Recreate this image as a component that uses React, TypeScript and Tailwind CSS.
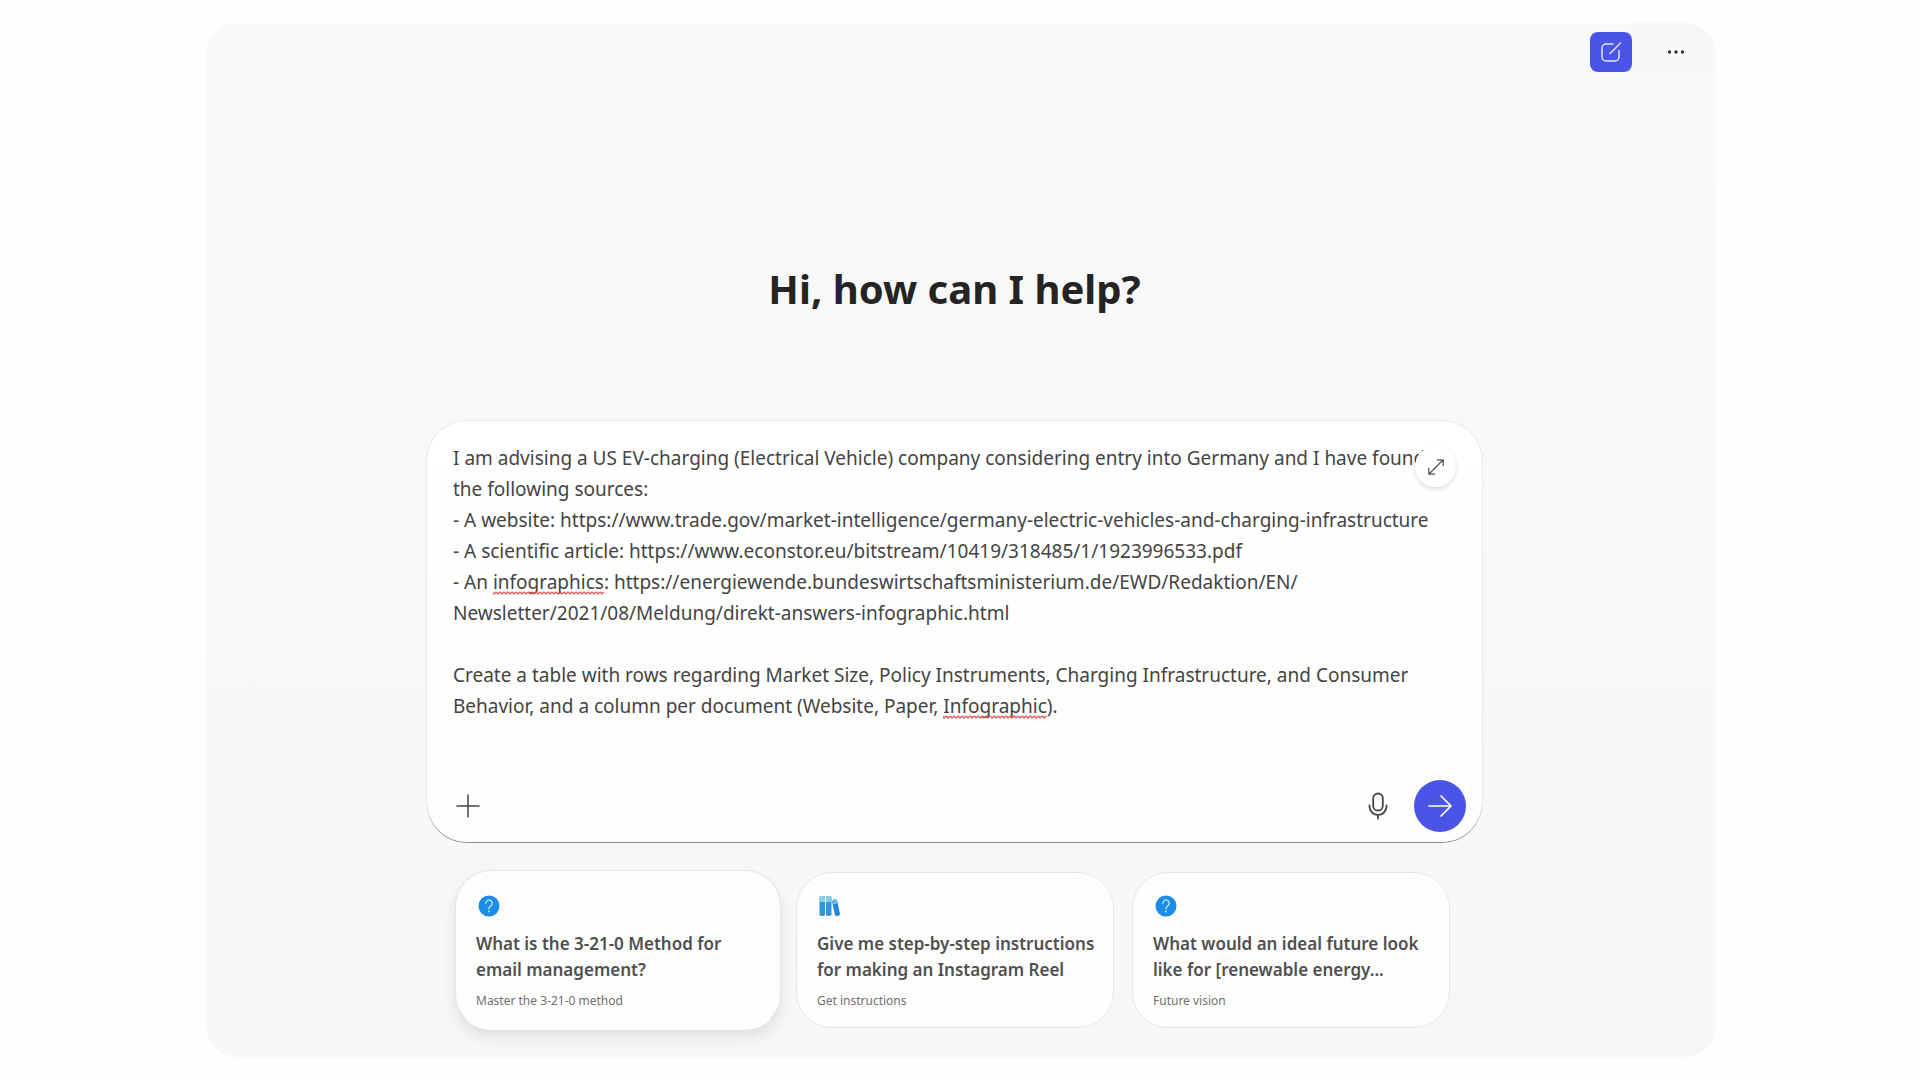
import { useLayoutEffect, useRef, useState } from "react"
import clsx from "clsx"

type Suggestion = {
  id: string
  icon: "question" | "books"
  title: string
  subtitle: string
  active?: boolean
}

type Mark = { line: number; left: number; width: number }

const SUGGESTIONS: Suggestion[] = [
  {
    id: "email",
    icon: "question",
    title: "What is the 3-21-0 Method for email management?",
    subtitle: "Master the 3-21-0 method",
    active: true
  },
  {
    id: "reel",
    icon: "books",
    title: "Give me step-by-step instructions for making an Instagram Reel",
    subtitle: "Get instructions"
  },
  {
    id: "future",
    icon: "question",
    title: "What would an ideal future look like for [renewable energy...",
    subtitle: "Future vision"
  }
]

const PROMPT = `I am advising a US EV-charging (Electrical Vehicle) company considering entry into Germany and I have found
the following sources:
- A website: https://www.trade.gov/market-intelligence/germany-electric-vehicles-and-charging-infrastructure
- A scientific article: https://www.econstor.eu/bitstream/10419/318485/1/1923996533.pdf
- An infographics: https://energiewende.bundeswirtschaftsministerium.de/EWD/Redaktion/EN/
Newsletter/2021/08/Meldung/direkt-answers-infographic.html

Create a table with rows regarding Market Size, Policy Instruments, Charging Infrastructure, and Consumer
Behavior, and a column per document (Website, Paper, Infographic).`

const LINE_HEIGHT = 31

// Words the spell checker does not know
const MISSPELLED = /\binfographics\b|\bInfographic\b/g

export default function App() {
  return (
    <div className="min-h-screen bg-[#fefefe] py-[23px] pr-[204px] pl-[206px] font-['Noto_Sans','Open_Sans',sans-serif] text-[#444]">
      <main className="flex min-h-[1034px] flex-col overflow-hidden rounded-[32px] bg-linear-to-b from-[#f9f9f9] via-[#f8f8f8] to-[#f7f7f5]">
        <Header />
        <div className="pr-[13px]">
          <div className="mx-auto flex w-full max-w-[1055px] flex-col">
            <h1 className="mt-[184px] text-center text-[40px] leading-[64px] font-bold text-[#242424]">
              Hi, how can I help?
            </h1>
            <Composer />
            <div className="mt-[30px] grid grid-cols-3 gap-[18px] pr-8 pl-[33px]">
              {SUGGESTIONS.map(item => (
                <SuggestionCard key={item.id} item={item} />
              ))}
            </div>
          </div>
        </div>
      </main>
    </div>
  )
}

function Header() {
  return (
    <header className="flex h-[50px] items-end justify-end">
      <button
        aria-label="New chat"
        className="mb-px flex h-10 w-[42px] items-center justify-center rounded-lg bg-[#4a55e8] text-[#e4e6ee]"
      >
        <svg viewBox="0 0 24 24" className="size-6" fill="none" stroke="currentColor" strokeWidth="1.5" strokeLinecap="round" strokeLinejoin="round">
          <path d="M14 4H7a4 4 0 0 0-4 4v9a4 4 0 0 0 4 4h9a4 4 0 0 0 4-4v-6.5" />
          <path d="M11 13.5 21.5 3" />
        </svg>
      </button>
      <div className="flex h-full w-[84px] items-center justify-center bg-[#f7f7f5] pl-1">
        <button aria-label="More options" className="flex size-10 items-center justify-center pt-2 text-[#333]">
          <svg viewBox="0 0 20 20" className="size-5" fill="currentColor">
            <circle cx="3.5" cy="10" r="1.7" />
            <circle cx="10" cy="10" r="1.7" />
            <circle cx="16.5" cy="10" r="1.7" />
          </svg>
        </button>
      </div>
    </header>
  )
}

function Composer() {
  const [prompt, setPrompt] = useState(PROMPT)
  const [marks, setMarks] = useState<Mark[]>([])
  const inputRef = useRef<HTMLTextAreaElement>(null)

  // Measure where the misspelled words fall so the squiggles can sit under them
  useLayoutEffect(() => {
    const ctx = document.createElement("canvas").getContext("2d")
    if (!ctx || !inputRef.current) return

    const style = getComputedStyle(inputRef.current)
    ctx.font = `${style.fontSize} ${style.fontFamily}`

    const next: Mark[] = []
    prompt.split("\n").forEach((text, line) => {
      for (const match of text.matchAll(MISSPELLED)) {
        next.push({
          line,
          left: ctx.measureText(text.slice(0, match.index)).width,
          width: ctx.measureText(match[0]).width
        })
      }
    })
    setMarks(next)
  }, [prompt])

  return (
    <form
      onSubmit={e => e.preventDefault()}
      className="relative mt-[100px] flex flex-col rounded-[40px] bg-linear-to-b from-white to-[#fdfdfb] px-[26px] pt-[22px] pb-[10px] shadow-[0_1px_0_#8f8f8f,0_0_0_1px_#e9e9e9]"
    >
      <div className="relative text-[19px] leading-[31px]">
        <textarea
          ref={inputRef}
          aria-label="Message"
          value={prompt}
          onChange={e => setPrompt(e.target.value)}
          rows={9}
          spellCheck={false}
          className="block w-full resize-none overflow-hidden bg-transparent whitespace-pre outline-none"
        />
        {marks.map(mark => (
          <Squiggle key={`${mark.line}-${mark.left}`} mark={mark} />
        ))}
      </div>
      <button
        type="button"
        aria-label="Expand"
        className="absolute top-[25px] right-[26px] flex size-[41px] items-center justify-center rounded-full bg-white text-[#555] shadow-[0_2px_4px_rgba(0,0,0,0.14)]"
      >
        <svg viewBox="0 0 20 20" className="size-[18px]" fill="none" stroke="currentColor" strokeWidth="1.4" strokeLinecap="round" strokeLinejoin="round">
          <path d="M11.5 2H18v6.5M18 2 2 18M2 11.5V18h6.5" />
        </svg>
      </button>
      <div className="mt-[58px] flex items-center pl-[3px]">
        <button type="button" aria-label="Add content" className="flex size-6 items-center justify-center">
          <svg viewBox="0 0 24 24" className="size-6" fill="none" stroke="currentColor" strokeWidth="1.5" strokeLinecap="round">
            <path d="M12 1v22M1 12h22" />
          </svg>
        </button>
        <button type="button" aria-label="Dictate" className="mr-[22px] ml-auto flex size-[28px] items-center justify-center">
          <svg viewBox="0 0 28 28" className="size-[28px]" fill="none" stroke="currentColor" strokeWidth="1.8" strokeLinecap="round">
            <rect x="9.2" y="1.5" width="9.6" height="17" rx="4.8" />
            <path d="M5.5 13.5v1a8.5 8.5 0 0 0 17 0v-1M14 23v3.5" />
          </svg>
        </button>
        <button type="submit" aria-label="Send" className="mr-[-10px] flex size-[52px] items-center justify-center rounded-full bg-[#4a55e8] text-white">
          <svg viewBox="0 0 26 26" className="size-[26px]" fill="none" stroke="currentColor" strokeWidth="1.7" strokeLinecap="round" strokeLinejoin="round">
            <path d="M2 13h22M14 3l10 10-10 10" />
          </svg>
        </button>
      </div>
    </form>
  )
}

function Squiggle({ mark }: { mark: Mark }) {
  return (
    <svg
      aria-hidden="true"
      className="pointer-events-none absolute h-1 overflow-hidden"
      style={{ left: mark.left, top: mark.line * LINE_HEIGHT + 24, width: mark.width }}
    >
      <defs>
        <pattern id="squiggle" width="4" height="4" patternUnits="userSpaceOnUse">
          <path d="M-1 0 1 3 3 1 5 3" fill="none" stroke="#d65a5a" strokeWidth="1.2" />
        </pattern>
      </defs>
      <rect width="100%" height="4" fill="url(#squiggle)" />
    </svg>
  )
}

function SuggestionCard({ item }: { item: Suggestion }) {
  return (
    <button
      className={clsx(
        "flex flex-col items-start rounded-[36px] border bg-[#fdfdfc] pr-3 pl-5 text-left",
        item.active
          ? "-my-[2px] -mr-[3px] -ml-[5px] border-[#e6e6e6] border-b-transparent pt-[24px] pb-[15px] shadow-[0_8px_14px_rgba(0,0,0,0.09)]"
          : "border-[#e6e6e6] pt-[22px] pb-[17px]"
      )}
    >
      <span className="ml-0.5">{item.icon === "books" ? <BooksIcon /> : <QuestionIcon />}</span>
      <span className="mt-[14px] line-clamp-2 text-[17px] leading-[26px] font-semibold text-[#505050]">{item.title}</span>
      <span className="mt-[9px] text-xs leading-[18px] text-[#707070]">{item.subtitle}</span>
    </button>
  )
}

function QuestionIcon() {
  return (
    <svg viewBox="0 0 22 22" className="size-[22px]" fill="none">
      <circle cx="11" cy="11" r="10.5" fill="#1b8ce8" />
      <path d="M7.8 8.2a3.2 3.2 0 1 1 5 2.7c-1.2.8-1.8 1.4-1.8 2.8" stroke="#b9e2f6" strokeWidth="1.4" strokeLinecap="round" />
      <circle cx="11" cy="16.5" r="1" fill="#b9e2f6" />
    </svg>
  )
}

function BooksIcon() {
  return (
    <svg viewBox="0 0 22 22" className="size-[22px]">
      <rect x="0.5" y="1" width="5.5" height="20" rx="1.8" fill="#2f95dd" />
      <rect x="7" y="1" width="5.5" height="20" rx="1.8" fill="#2f95dd" />
      <path d="M.5 7V2.8A1.8 1.8 0 0 1 2.3 1h1.9A1.8 1.8 0 0 1 6 2.8V7zM7 7V2.8A1.8 1.8 0 0 1 8.8 1h1.9a1.8 1.8 0 0 1 1.8 1.8V7z" fill="#8ccbe8" />
      <g transform="rotate(-12 17 13)">
        <rect x="14.5" y="4.5" width="5.2" height="16.5" rx="1.8" fill="#1f86d8" />
        <path d="M14.5 9V6.3a1.8 1.8 0 0 1 1.8-1.8h1.6a1.8 1.8 0 0 1 1.8 1.8V9z" fill="#6db9e6" />
      </g>
    </svg>
  )
}
